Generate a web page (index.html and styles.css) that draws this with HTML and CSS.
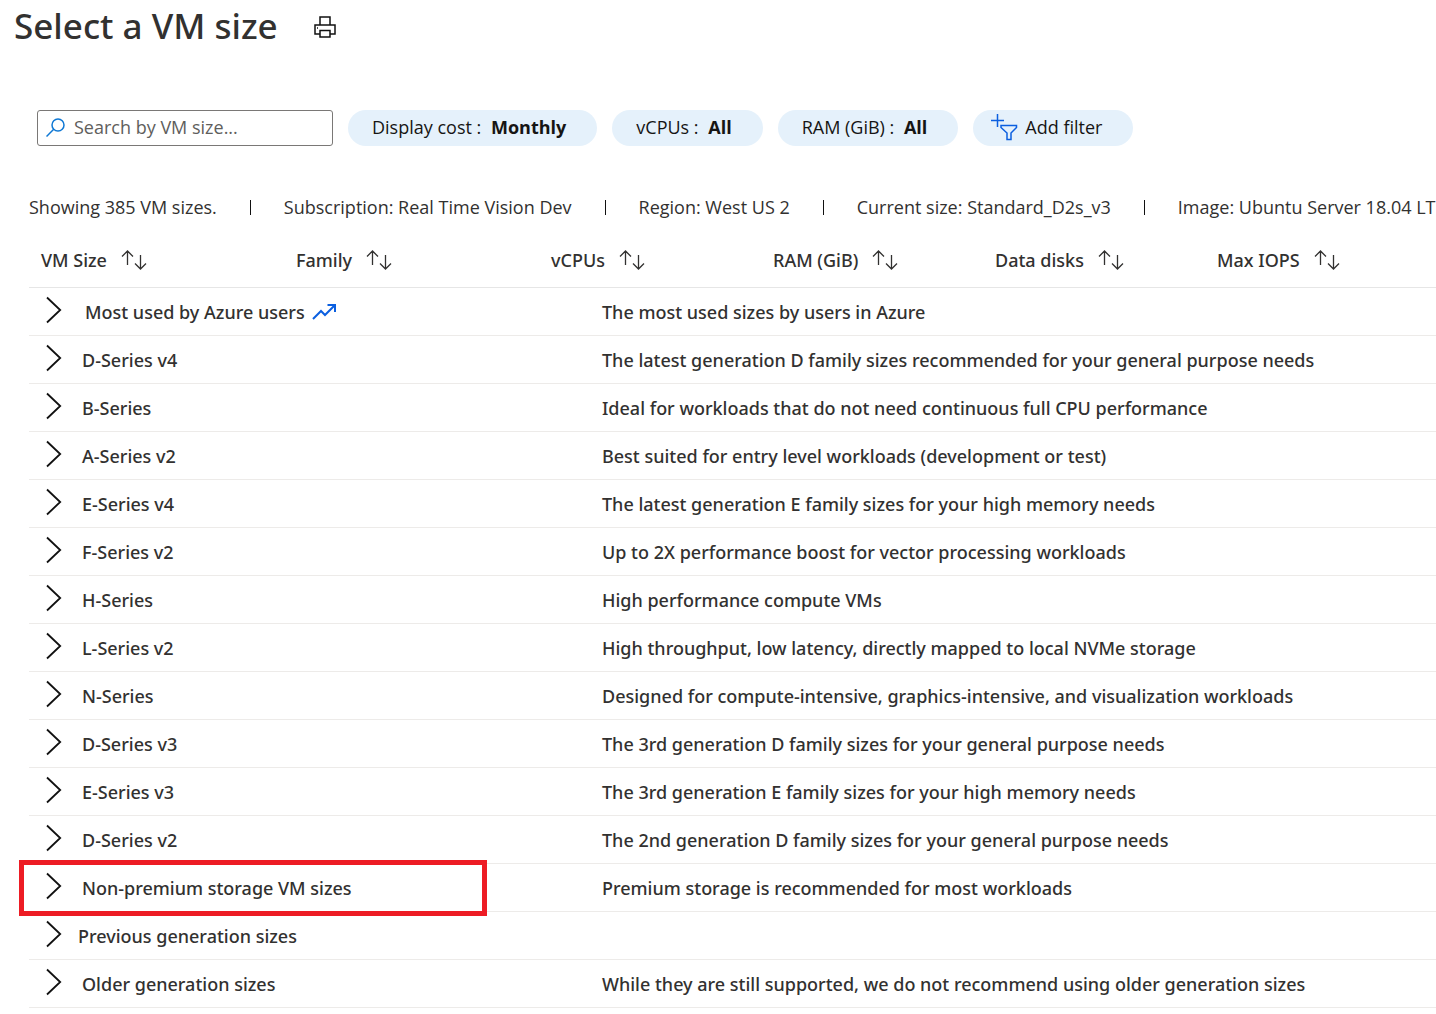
FILE: index.html
```html
<!DOCTYPE html>
<html lang="en">
<head>
<meta charset="utf-8">
<title>Select a VM size</title>
<link rel="stylesheet" href="styles.css">
</head>
<body>
<svg class="sprite" aria-hidden="true">
  <symbol id="chevron" viewBox="0 0 16 28"><path d="M1 1.500L14.200 14 1 26.500" fill="none" stroke="#111" stroke-width="1.800"/></symbol>
  <symbol id="sort" viewBox="0 0 26 20"><path d="M6.500 1V15M1 6.500L6.500 1 12 6.500M19.500 5V19M14 13.500L19.500 19 25 13.500" fill="none" stroke="#323130" stroke-width="1.300"/></symbol>
</svg>
<header class="title-bar">
  <h1 class="title">Select a VM size</h1>
  <button class="print" type="button" aria-label="Print">
    <svg width="22" height="22" viewBox="0 0 22 22" fill="none" stroke="#111" stroke-width="1.500"><path d="M6 9V1H16V9M5.500 18H1V9H21V18H16.500M6 14.500H16V21H6Z"/><path d="M3 12H4"/></svg>
  </button>
</header>
<main class="content">
  <form class="filters">
    <label class="search">
      <svg width="20" height="20" viewBox="0 0 20 20" fill="none" stroke="#0f78d4" stroke-width="1.500"><circle cx="12" cy="8" r="6"/><path d="M7.700 12.300L0.500 19.500"/></svg>
      <input class="search-input" type="text" placeholder="Search by VM size..." aria-label="Search by VM size">
    </label>
    <button class="pill" type="button">Display cost : <b>Monthly</b></button>
    <button class="pill" type="button">vCPUs : <b>All</b></button>
    <button class="pill" type="button">RAM (GiB) : <b>All</b></button>
    <button class="pill pill-add" type="button"><svg width="28" height="28" viewBox="0 0 28 28" fill="none" stroke="#0b5fe0" stroke-width="1.500"><path d="M6.500 1V14M0 7.500H13M10 12.500H25.500V14.500L20 20V26.500H16V20L10 14.500Z"/></svg>Add filter</button>
  </form>
  <ul class="summary">
    <li>Showing 385 VM sizes.</li>
    <li>Subscription: Real Time Vision Dev</li>
    <li>Region: West US 2</li>
    <li>Current size: Standard_D2s_v3</li>
    <li>Image: Ubuntu Server 18.04 LT</li>
  </ul>
  <table class="sizes">
    <colgroup><col class="col-wide"><col class="col-wide"><col class="col"><col class="col"><col class="col"><col></colgroup>
    <thead>
      <tr>
        <th scope="col"><button class="sort" type="button">VM Size <svg><use href="#sort"/></svg></button></th>
        <th scope="col"><button class="sort" type="button">Family <svg><use href="#sort"/></svg></button></th>
        <th scope="col"><button class="sort" type="button">vCPUs <svg><use href="#sort"/></svg></button></th>
        <th scope="col"><button class="sort" type="button">RAM (GiB) <svg><use href="#sort"/></svg></button></th>
        <th scope="col"><button class="sort" type="button">Data disks <svg><use href="#sort"/></svg></button></th>
        <th scope="col"><button class="sort" type="button">Max IOPS <svg><use href="#sort"/></svg></button></th>
      </tr>
    </thead>
    <tbody>
      <tr><td colspan="2"><button class="group group-top" type="button"><svg class="chev"><use href="#chevron"/></svg><span>Most used by Azure users</span><svg class="trend" viewBox="0 0 26 18"><path d="M1 16L9 8 13 12 22 3M15.500 2H23V9" fill="none" stroke="#0b5fe0" stroke-width="2"/></svg></button></td><td class="desc" colspan="4">The most used sizes by users in Azure</td></tr>
      <tr><td colspan="2"><button class="group" type="button"><svg class="chev"><use href="#chevron"/></svg>D-Series v4</button></td><td class="desc" colspan="4">The latest generation D family sizes recommended for your general purpose needs</td></tr>
      <tr><td colspan="2"><button class="group" type="button"><svg class="chev"><use href="#chevron"/></svg>B-Series</button></td><td class="desc" colspan="4">Ideal for workloads that do not need continuous full CPU performance</td></tr>
      <tr><td colspan="2"><button class="group" type="button"><svg class="chev"><use href="#chevron"/></svg>A-Series v2</button></td><td class="desc" colspan="4">Best suited for entry level workloads (development or test)</td></tr>
      <tr><td colspan="2"><button class="group" type="button"><svg class="chev"><use href="#chevron"/></svg>E-Series v4</button></td><td class="desc" colspan="4">The latest generation E family sizes for your high memory needs</td></tr>
      <tr><td colspan="2"><button class="group" type="button"><svg class="chev"><use href="#chevron"/></svg>F-Series v2</button></td><td class="desc" colspan="4">Up to 2X performance boost for vector processing workloads</td></tr>
      <tr><td colspan="2"><button class="group" type="button"><svg class="chev"><use href="#chevron"/></svg>H-Series</button></td><td class="desc" colspan="4">High performance compute VMs</td></tr>
      <tr><td colspan="2"><button class="group" type="button"><svg class="chev"><use href="#chevron"/></svg>L-Series v2</button></td><td class="desc" colspan="4">High throughput, low latency, directly mapped to local NVMe storage</td></tr>
      <tr><td colspan="2"><button class="group" type="button"><svg class="chev"><use href="#chevron"/></svg>N-Series</button></td><td class="desc" colspan="4">Designed for compute-intensive, graphics-intensive, and visualization workloads</td></tr>
      <tr><td colspan="2"><button class="group" type="button"><svg class="chev"><use href="#chevron"/></svg>D-Series v3</button></td><td class="desc" colspan="4">The 3rd generation D family sizes for your general purpose needs</td></tr>
      <tr><td colspan="2"><button class="group" type="button"><svg class="chev"><use href="#chevron"/></svg>E-Series v3</button></td><td class="desc" colspan="4">The 3rd generation E family sizes for your high memory needs</td></tr>
      <tr><td colspan="2"><button class="group" type="button"><svg class="chev"><use href="#chevron"/></svg>D-Series v2</button></td><td class="desc" colspan="4">The 2nd generation D family sizes for your general purpose needs</td></tr>
      <tr><td class="marked" colspan="2"><button class="group" type="button"><svg class="chev"><use href="#chevron"/></svg>Non-premium storage VM sizes</button></td><td class="desc" colspan="4">Premium storage is recommended for most workloads</td></tr>
      <tr><td colspan="2"><button class="group group-previous" type="button"><svg class="chev"><use href="#chevron"/></svg>Previous generation sizes</button></td><td class="desc" colspan="4"></td></tr>
      <tr><td colspan="2"><button class="group" type="button"><svg class="chev"><use href="#chevron"/></svg>Older generation sizes</button></td><td class="desc" colspan="4">While they are still supported, we do not recommend using older generation sizes</td></tr>
    </tbody>
  </table>
</main>
</body>
</html>
```
FILE: styles.css
```css
* { box-sizing: border-box; }
body {
  margin: 0;
  background: #fff;
  color: #323130;
  font: 400 18px/24px "Open Sans", "Noto Sans", sans-serif;
}
button, input { font: inherit; color: inherit; }
button { border: 0; background: none; padding: 0; cursor: pointer; }
svg { flex: none; }
.sprite { position: absolute; width: 0; height: 0; }

.title-bar { display: flex; align-items: center; gap: 36px; height: 54px; padding-left: 14px; }
.title { margin: 0; padding-bottom: 2px; font: 500 35px/44px "Noto Sans", "Open Sans", sans-serif; }
.print { display: flex; }

.content { padding-left: 29px; }
.filters { display: flex; gap: 15px; margin: 56px 0 0 8px; }
.search {
  display: flex; align-items: center; gap: 8px;
  width: 296px; height: 36px; padding: 0 8px 2px;
  border: 1px solid #7a7876; border-radius: 3px;
}
.search-input { flex: 1; min-width: 0; border: 0; padding: 0; outline: 0; background: none; }
.search-input::placeholder { color: #605e5c; opacity: 1; }
.pill {
  display: flex; align-items: center; gap: 5px; height: 36px;
  padding: 0 31px 2px 24px; border-radius: 18px;
  background: #e5f1fb; color: #161514; white-space: pre;
}
.pill b { font-weight: 700; }
.pill-add { gap: 6px; padding: 0 31px 2px 18px; }

.summary {
  display: flex; margin: 47px 0 0; padding: 0; list-style: none;
  height: 28px; align-items: center; overflow: hidden; white-space: nowrap;
}
.summary li { display: flex; align-items: center; }
.summary li + li::before { content: ""; width: 1px; height: 15px; margin: 0 33px 0 33px; background: #111; }

.sizes {
  width: 100%; margin-top: 11px; table-layout: fixed; border-collapse: separate; border-spacing: 0;
  font-family: "Noto Sans", "Open Sans", sans-serif; font-weight: 500;
}
.col-wide { width: 255px; }
.col { width: 222px; }
.sizes th { height: 56px; padding: 0 0 0 12px; text-align: left; font-weight: 500; border-bottom: 1px solid #e6e6e6; }
.sort { display: flex; align-items: center; gap: 14px; white-space: nowrap; }
.sort svg { width: 26px; height: 20px; }
.sizes td { height: 48px; padding: 0; border-bottom: 1px solid #edebe9; white-space: nowrap; }
.sizes .desc { padding-left: 63px; }
.group { display: flex; align-items: center; width: 100%; padding-left: 17px; gap: 20px; }
.group-top { gap: 23px; }
.group-previous { gap: 16px; }
.chev { width: 16px; height: 28px; margin-bottom: 4px; }
.trend { width: 26px; height: 18px; margin-left: -16px; }
.marked { position: relative; }
.marked::after { content: ""; position: absolute; inset: -4px 52px -5px -10px; border: 5px solid #ed1c24; pointer-events: none; }
```
